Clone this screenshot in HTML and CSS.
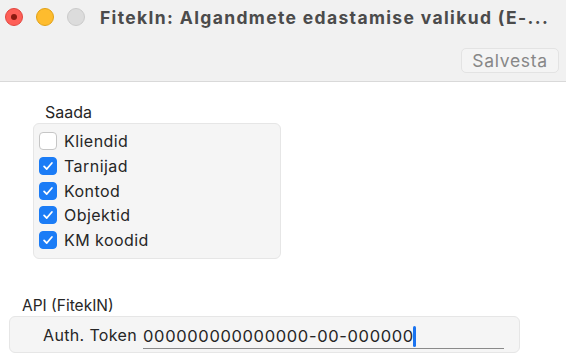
FILE: index.html
```html
<!DOCTYPE html>
<html>
<head>
<meta charset="utf-8">
<link rel="stylesheet" href="styles.css">
</head>
<body>
<div class="window">
  <header class="titlebar">
    <div class="title-row">
      <div class="lights">
        <span class="light red"><span class="dot"></span></span>
        <span class="light yellow"></span>
        <span class="light gray"></span>
      </div>
      <div class="title">FitekIn: Algandmete edastamise valikud (E-...</div>
    </div>
    <div class="toolbar">
      <button class="btn">Salvesta</button>
    </div>
  </header>
  <main class="content">
    <section class="saada">
      <div class="label">Saada</div>
      <div class="box checks">
        <label class="row"><span class="cb"></span><span>Kliendid</span></label>
        <label class="row"><span class="cb on"><svg viewBox="0 0 18 18"><path d="M4.6 9.4 L7.6 12.4 L13.4 5.6"/></svg></span><span>Tarnijad</span></label>
        <label class="row"><span class="cb on"><svg viewBox="0 0 18 18"><path d="M4.6 9.4 L7.6 12.4 L13.4 5.6"/></svg></span><span>Kontod</span></label>
        <label class="row"><span class="cb on"><svg viewBox="0 0 18 18"><path d="M4.6 9.4 L7.6 12.4 L13.4 5.6"/></svg></span><span>Objektid</span></label>
        <label class="row"><span class="cb on"><svg viewBox="0 0 18 18"><path d="M4.6 9.4 L7.6 12.4 L13.4 5.6"/></svg></span><span>KM koodid</span></label>
      </div>
    </section>
    <section class="api">
      <div class="label api-label">API (FitekIN)</div>
      <div class="box field">
        <span class="flabel">Auth. Token</span>
        <div class="input"><span class="val">000000000000000-00-000000</span><span class="caret"></span></div>
      </div>
    </section>
  </main>
</div>
</body>
</html>
```
FILE: styles.css
```css
html, body { margin: 0; padding: 0; }
body {
  width: 566px; height: 363px; overflow: hidden;
  background: #ffffff;
  font-family: Inter, "Liberation Sans", sans-serif;
  color: #262626;
}
.window { width: 566px; height: 363px; display: flex; flex-direction: column; }
.titlebar {
  height: 82px; box-sizing: border-box;
  background: #f1f1f1;
  border-bottom: 1px solid #d9d9d9;
  display: flex; flex-direction: column;
}
.title-row { display: flex; align-items: center; height: 34px; padding-left: 5px; }
.lights { display: flex; gap: 13px; }
.light {
  width: 18px; height: 18px; border-radius: 50%; box-sizing: border-box;
  display: flex; align-items: center; justify-content: center;
}
.light.red { background: #fe5f57; border: 1px solid #e2463f; }
.light.red .dot { width: 6px; height: 6px; border-radius: 50%; background: #8c1a10; }
.light.yellow { background: #febc2e; border: 1px solid #e1a116; }
.light.gray { background: #dcdcdc; border: 1px solid #cbcbcb; }
.title {
  margin-left: 15px;
  font-weight: 700; font-size: 17.5px; letter-spacing: 1.35px; color: #4b4b4b;
  white-space: nowrap;
}
.toolbar { display: flex; justify-content: flex-end; padding: 14px 7px 0 0; }
.btn {
  width: 98px; height: 25px; box-sizing: border-box;
  border: 1px solid #e3e3e3; border-radius: 5px;
  background: #f4f4f4; color: #878787;
  font-family: inherit; font-size: 17.5px; letter-spacing: 0.7px; padding: 0;
}
.content { display: flex; flex-direction: column; }
.label { font-size: 16px; color: #262626; line-height: 20px; }
.box {
  background: #f5f5f5; border: 1px solid #e6e6e6; border-radius: 6px; box-sizing: border-box;
}
.saada { padding: 20px 0 0 33px; }
.saada .label { padding-left: 12px; margin-bottom: 1px; }
.checks {
  width: 248px; height: 136px; padding: 8px 0 0 5px;
  display: flex; flex-direction: column; gap: 6.75px;
}
.row { display: flex; align-items: center; gap: 7px; font-size: 16px; letter-spacing: 0.45px; height: 18px; color: #262626; }
.cb {
  width: 18px; height: 18px; box-sizing: border-box; border-radius: 4px;
  border: 1px solid #c6c6c6; background: #ffffff; display: flex;
}
.cb.on { background: #1b7cf6; border-color: #1b7cf6; }
.cb svg { width: 16px; height: 16px; }
.cb path { fill: none; stroke: #ffffff; stroke-width: 2; stroke-linecap: round; stroke-linejoin: round; }
.api { padding: 37px 0 0 9px; }
.api .api-label { padding-left: 13px; font-size: 15.5px; margin-bottom: 0; }
.field {
  width: 511px; height: 37px; display: flex; align-items: center; padding-left: 33px;
}
.flabel { font-size: 16px; letter-spacing: 0.35px; color: #262626; }
.input {
  margin-left: 6px; width: 361px; height: 24px; box-sizing: border-box;
  border-bottom: 1px solid #8a8a8a; display: flex; align-items: center;
  font-size: 16.5px; letter-spacing: 0.65px; color: #262626; margin-top: 4px;
}
.caret { width: 3px; height: 21px; border-radius: 2px; background: #1a73f0; margin-left: -1px; }
```
